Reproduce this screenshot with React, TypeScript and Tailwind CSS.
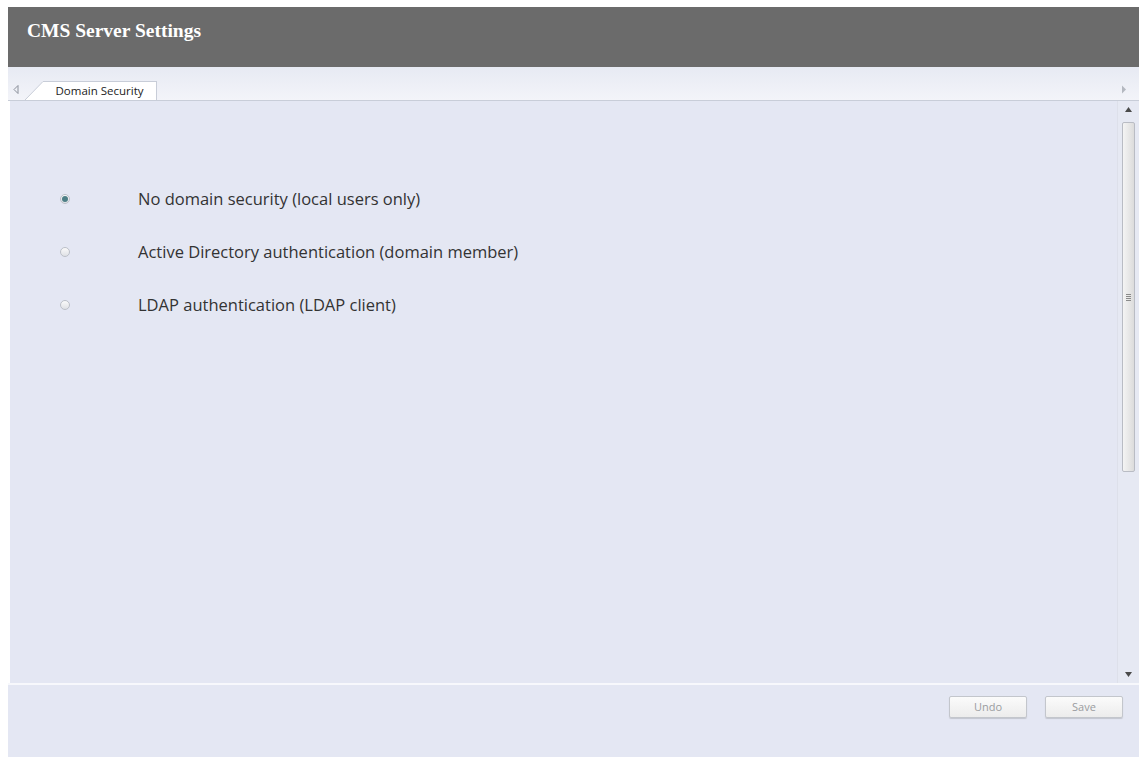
import { useState } from 'react';

const options = [
  { id: 'none', label: 'No domain security (local users only)' },
  { id: 'ad', label: 'Active Directory authentication (domain member)' },
  { id: 'ldap', label: 'LDAP authentication (LDAP client)' },
];

function Radio({ checked }: { checked: boolean }) {
  return (
    <span className="flex h-[10px] w-[10px] items-center justify-center rounded-full border border-[#bcc0c8] bg-gradient-to-b from-[#fafafa] to-[#dfe1e5]">
      {checked && <span className="h-[6px] w-[6px] rounded-full bg-[#4d7f86]" />}
    </span>
  );
}

function Scrollbar() {
  return (
    <div className="flex w-[22px] flex-col items-center border-l border-[#dde0ea] bg-[#e6e9f3] py-1">
      <svg width="7" height="5" viewBox="0 0 7 5" className="mt-[2px]">
        <path d="M3.5 0 L7 5 L0 5 Z" fill="#4a4a4a" />
      </svg>
      <div className="mt-[10px] flex w-[13px] flex-1 items-center justify-center rounded-[2px] border border-[#b9bcc4] bg-gradient-to-r from-[#f4f4f4] to-[#dcdcdc]">
        <div className="flex flex-col gap-[1px]">
          <span className="h-[1px] w-[5px] bg-[#8a8a8a]" />
          <span className="h-[1px] w-[5px] bg-[#8a8a8a]" />
          <span className="h-[1px] w-[5px] bg-[#8a8a8a]" />
          <span className="h-[1px] w-[5px] bg-[#8a8a8a]" />
        </div>
      </div>
      <div className="h-[194px]" />
      <svg width="7" height="5" viewBox="0 0 7 5" className="mb-[2px] mt-[6px]">
        <path d="M0 0 L7 0 L3.5 5 Z" fill="#4a4a4a" />
      </svg>
    </div>
  );
}

export default function App() {
  const [selected, setSelected] = useState('none');

  return (
    <div className="flex h-[757px] w-[1139px] flex-col bg-white pl-[8px] pt-[7px] font-['Open_Sans',sans-serif]">
      <div className="flex h-[60px] items-start bg-[#6b6b6b] pl-[19px] pt-[9px]">
        <span className="font-['Liberation_Serif',serif] text-[19.5px] font-bold text-white">
          CMS Server Settings
        </span>
      </div>

      <div className="flex h-[34px] items-end border-b border-[#c8cdd8] bg-gradient-to-b from-[#e7eaf3] to-[#f3f4f9]">
        <svg width="6" height="9" viewBox="0 0 6 9" className="mb-[6px] ml-[5px]">
          <path d="M5 0.5 L1 4.5 L5 8.5 Z" fill="none" stroke="#8a8f99" strokeWidth="1" />
        </svg>
        <div className="relative ml-[24px] flex h-[19px] w-[114px] items-center justify-center border-r border-t border-[#c8cdd8] bg-white text-[11.5px] text-[#222]">
          <svg width="19" height="19" viewBox="0 0 19 19" className="absolute -left-[18px] top-[-1px]">
            <path d="M0 19 L18 0.5 L19 0.5 L19 19 Z" fill="#ffffff" />
            <path d="M0 19 L18 0.5 L19 0.5" fill="none" stroke="#c8cdd8" strokeWidth="1" />
          </svg>
          Domain Security
        </div>
        <div className="flex-1" />
        <svg width="6" height="9" viewBox="0 0 6 9" className="mb-[6px] mr-[12px]">
          <path d="M1 0.5 L5 4.5 L1 8.5 Z" fill="#b4b8c0" />
        </svg>
      </div>

      <div className="ml-[2px] flex h-[582px] bg-[#e4e7f3]">
        <div className="flex flex-1 flex-col gap-[30px] pl-[50px] pt-[86px]">
          {options.map((o) => (
            <label
              key={o.id}
              className="flex cursor-pointer items-center"
              onClick={() => setSelected(o.id)}
            >
              <Radio checked={selected === o.id} />
              <span className="ml-[68px] text-[16.5px] leading-[23px] text-[#333]">{o.label}</span>
            </label>
          ))}
        </div>
        <Scrollbar />
      </div>

      <div className="h-[2px] bg-[#f7f8fc]" />

      <div className="flex flex-1 items-start justify-end gap-[18px] bg-[#e4e7f3] pr-[16px] pt-[11px]">
        <button className="h-[22px] w-[78px] rounded-[2px] border border-[#c3c6cc] bg-gradient-to-b from-[#fbfbfb] to-[#ececec] text-[11px] text-[#9a9ca0] shadow-[0_1px_1px_rgba(0,0,0,0.15)]">
          Undo
        </button>
        <button className="h-[22px] w-[78px] rounded-[2px] border border-[#c3c6cc] bg-gradient-to-b from-[#fbfbfb] to-[#ececec] text-[11px] text-[#9a9ca0] shadow-[0_1px_1px_rgba(0,0,0,0.15)]">
          Save
        </button>
      </div>
    </div>
  );
}
